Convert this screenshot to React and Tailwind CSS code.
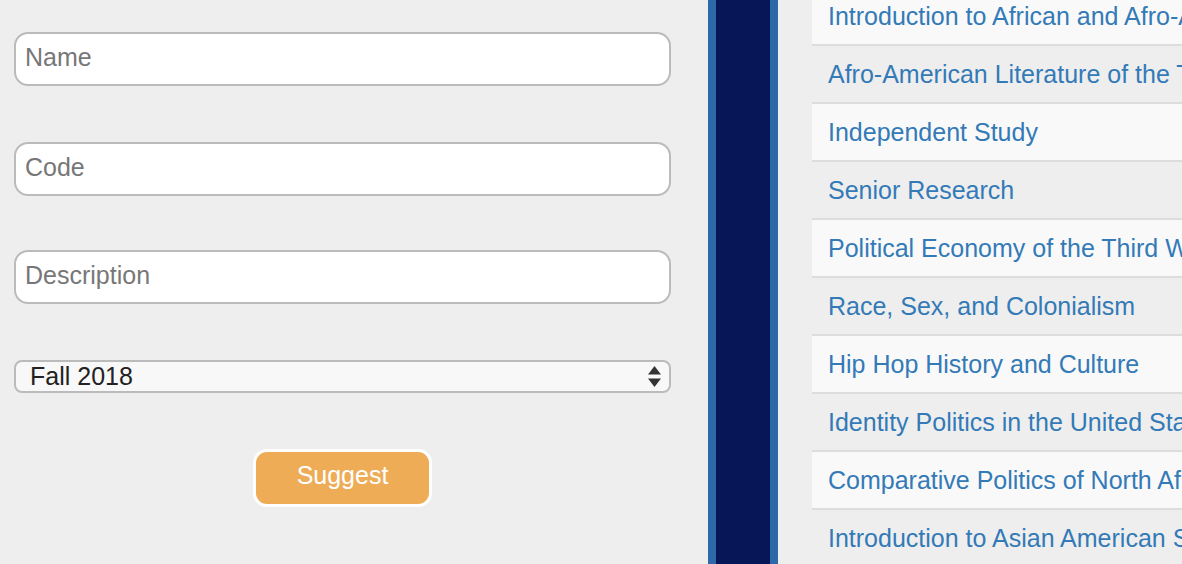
import React, { useState } from "react";

const courses = [
  "Introduction to African and Afro-American Studies",
  "Afro-American Literature of the Twentieth Century",
  "Independent Study",
  "Senior Research",
  "Political Economy of the Third World",
  "Race, Sex, and Colonialism",
  "Hip Hop History and Culture",
  "Identity Politics in the United States",
  "Comparative Politics of North Africa",
  "Introduction to Asian American Studies",
];

const inputClass =
  "block w-full h-[54px] rounded-[14px] border-2 border-[#bbbbbb] bg-white px-[9px] pb-[3px] text-[25px] text-[#333] placeholder:text-[#777] outline-none";

const App = () => {
  const [term, setTerm] = useState("Fall 2018");

  return (
    <div
      className="flex h-[564px] w-[1182px] overflow-hidden bg-[#eeeeee]"
      style={{ fontFamily: '"Liberation Sans", Arial, sans-serif' }}
    >
      {/* Suggest form */}
      <div className="w-[708px] shrink-0 pl-[14px] pr-[37px] pt-[32px]">
        <input className={inputClass} placeholder="Name" />
        <input className={`${inputClass} mt-[56px]`} placeholder="Code" />
        <input className={`${inputClass} mt-[54px]`} placeholder="Description" />

        <div className="relative mt-[56px]">
          <select
            value={term}
            onChange={(e) => setTerm(e.target.value)}
            className="block h-[33px] w-full appearance-none rounded-[8px] border-2 border-[#bbbbbb] bg-[#f8f8f8] pl-[14px] text-[25px] leading-none text-[#222] outline-none"
          >
            <option>Fall 2018</option>
            <option>Spring 2019</option>
          </select>
          <svg
            className="pointer-events-none absolute right-[10px] top-[6px]"
            width="13"
            height="21"
            viewBox="0 0 13 21"
          >
            <path d="M6.5 0 L13 8.5 L0 8.5 Z" fill="#333" />
            <path d="M0 12.5 L13 12.5 L6.5 21 Z" fill="#333" />
          </svg>
        </div>

        <div className="mt-[56px] flex justify-center">
          <button className="h-[58px] w-[179px] rounded-[14px] border-[3px] border-white bg-[#eeac57] pb-[4px] text-[25px] text-white">
            Suggest
          </button>
        </div>
      </div>

      {/* Divider bar */}
      <div className="h-full w-[70px] shrink-0 border-x-[8px] border-[#2d68a8] bg-[#061656]" />

      {/* Course list */}
      <div className="ml-[34px] min-w-0 flex-1 overflow-hidden">
        <ul className="-mt-[12px]">
          {courses.map((c, i) => (
            <li
              key={c}
              className={`flex h-[58px] items-center whitespace-nowrap border-b-2 border-[#dddddd] pl-[16px] pt-[2px] text-[25px] text-[#337ab7] ${
                i % 2 === 0 ? "bg-[#f9f9f9]" : "bg-[#eeeeee]"
              }`}
            >
              {c}
            </li>
          ))}
        </ul>
      </div>
    </div>
  );
};

export default App;
